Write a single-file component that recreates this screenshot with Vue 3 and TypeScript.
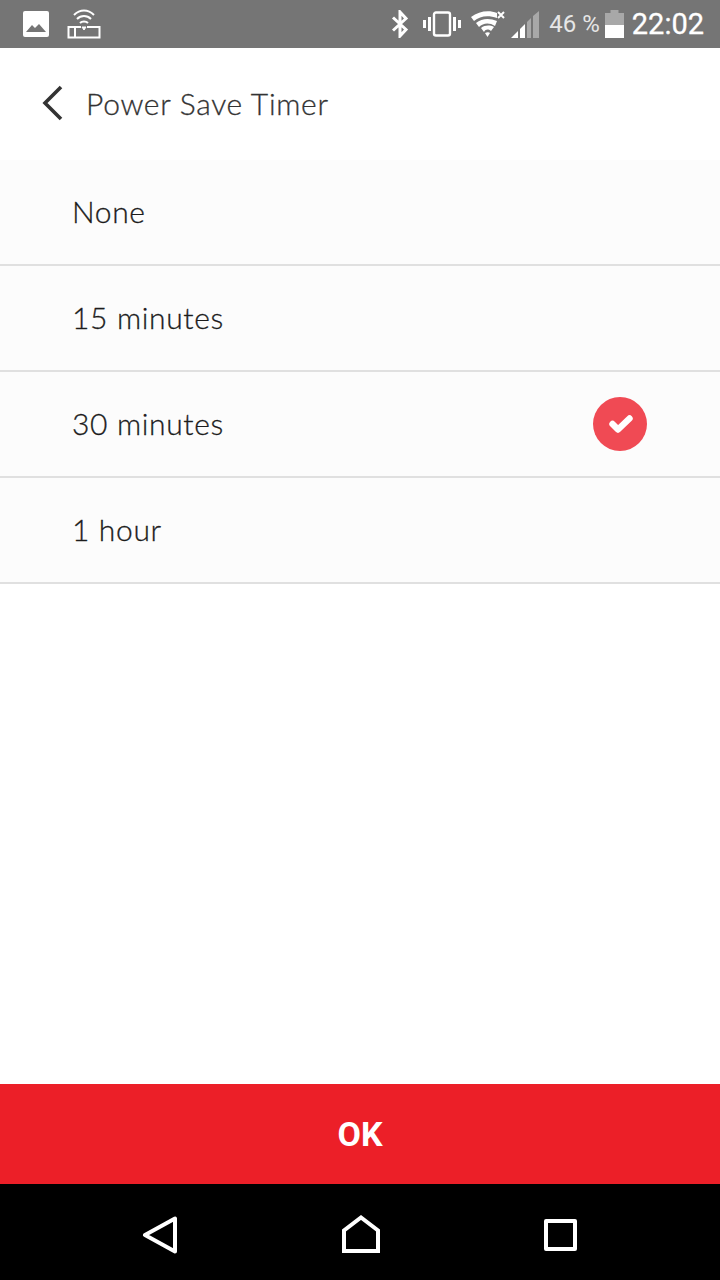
<script setup lang="ts">
const rows: { label: string; checked: boolean }[] = [
  { label: 'None', checked: false },
  { label: '15 minutes', checked: false },
  { label: '30 minutes', checked: true },
  { label: '1 hour', checked: false },
]
</script>

<template>
  <div class="page">
    <div class="status">
      <div class="left">
        <svg width="26" height="26" viewBox="0 0 26 26">
          <rect width="26" height="26" rx="2" fill="#fff" />
          <path d="M3 21 L9 14 L12 17 L16 13 L23 21 Z" fill="#757575" />
        </svg>
        <svg width="34" height="30" viewBox="0 0 34 30" fill="none" stroke="#fff">
          <path d="M7 6 C13 0 21 0 27 6" stroke-width="2" />
          <path d="M10 10 C14 6 20 6 24 10" stroke-width="2" />
          <path d="M13 14 C15 12 19 12 21 14" stroke-width="2" />
          <path d="M15 18 L17 21 L19 18 Z" fill="#fff" stroke-width="1" />
          <path d="M14 18 H1.5 V28.5 H32.5 V18 H20 M8 18 V28.5" stroke-width="2" />
        </svg>
      </div>
      <div class="right">
        <svg class="bt" width="18" height="28" viewBox="0 0 18 28" fill="none" stroke="#fff" stroke-width="3">
          <path d="M2 7.5 L15 19.5 L9 26 V2 L15 8.5 L2 20.5" />
        </svg>
        <svg class="vib" width="38" height="26" viewBox="0 0 38 26" fill="none" stroke="#fff">
          <rect x="11" y="1.5" width="16" height="23" rx="2" stroke-width="2.4" />
          <path d="M1.5 9 V17 M6.5 6 V20 M31.5 6 V20 M36.5 9 V17" stroke-width="3" />
        </svg>
        <svg class="wifi" width="34" height="28" viewBox="0 0 34 28">
          <path d="M0 7 C8 1 18 0 26 3 V8 C17 5 9 6 3 11 Z" fill="#fff" />
          <path d="M5 13 C11 8 19 8 26 11 L24 16 C18 12 12 13 8 17 Z" fill="#fff" />
          <path d="M10 18 C14 15 19 15 23 17 L20 21 C17 19 15 19 13 22 Z" fill="#fff" />
          <path d="M14 23 C16 22 18 22 19 23 L16.500 27 Z" fill="#fff" />
          <path d="M27 2 L33 8 M33 2 L27 8" stroke="#fff" stroke-width="2" />
        </svg>
        <svg class="signal" width="29" height="28" viewBox="0 0 29 28">
          <path d="M0 27 L7 20 V27 Z" fill="#fff" />
          <path d="M9 18 L14 13 V27 H9 Z" fill="#fff" />
          <path d="M16 11 L20 7 V27 H16 Z" fill="#a8a8a8" />
          <path d="M22 5 L28 0 V27 H22 Z" fill="#a8a8a8" />
        </svg>
        <span class="pct">46 %</span>
        <svg class="batt" width="19" height="28" viewBox="0 0 19 28">
          <path d="M5.500 0 H13.500 V3 H19 V28 H0 V3 H5.500 Z" fill="#a8a8a8" />
          <rect y="15" width="19" height="13" fill="#fff" />
        </svg>
        <span class="time">22:02</span>
      </div>
    </div>

    <header class="head">
      <svg class="chev" width="24" height="38" viewBox="0 0 24 38" fill="none" stroke="#333" stroke-width="3.600">
        <path d="M20 3 L4 19 L20 35" />
      </svg>
      <span class="title">Power Save Timer</span>
    </header>

    <ul class="list">
      <li v-for="r in rows" :key="r.label" class="row">
        <span class="label">{{ r.label }}</span>
        <svg v-if="r.checked" class="check" width="54" height="54" viewBox="0 0 54 54">
          <circle cx="27" cy="27" r="27" fill="#f04a54" />
          <path d="M19.500 27 L25 32.500 L36.500 21.500" fill="none" stroke="#fff" stroke-width="6.400" stroke-linecap="round" stroke-linejoin="round" />
        </svg>
      </li>
    </ul>

    <div class="spacer"></div>

    <button class="ok" type="button">OK</button>

    <nav class="nav">
      <svg class="nav-back" width="36" height="38" viewBox="0 0 36 38" fill="none" stroke="#fff" stroke-width="4" stroke-linejoin="round">
        <path d="M33 2.500 V35.500 L3 19 Z" />
      </svg>
      <svg width="38" height="38" viewBox="0 0 38 38" fill="none" stroke="#fff" stroke-width="4">
        <path d="M2 36 V15.500 L19 2.500 L36 15.500 V36 Z" />
      </svg>
      <svg class="nav-recent" width="33" height="32" viewBox="0 0 33 32" fill="none" stroke="#fff" stroke-width="4" stroke-linejoin="round">
        <rect x="2" y="2" width="29" height="28" />
      </svg>
    </nav>
  </div>
</template>

<style scoped>
.page {
  width: 720px;
  height: 1280px;
  display: flex;
  flex-direction: column;
  background: #fff;
  font-family: Lato, "Noto Sans", sans-serif;
  overflow: hidden;
}
.status {
  height: 48px;
  flex: none;
  background: #757575;
  display: flex;
  align-items: center;
  justify-content: space-between;
  padding: 0 16px 0 23px;
  color: #fff;
}
.left {
  display: flex;
  align-items: center;
  gap: 18px;
}
.right {
  display: flex;
  align-items: center;
}
.vib { margin-left: 14px; }
.wifi { margin-left: 10px; }
.signal { margin-left: 6px; margin-top: 2px; }
.pct {
  margin-left: 9px;
  font-family: Roboto, sans-serif;
  font-size: 24px;
  color: #e6e6e6;
}
.batt { margin-left: 5px; }
.time {
  margin-left: 8px;
  font-family: Roboto, sans-serif;
  font-size: 29px;
  -webkit-text-stroke: 0.3px #fff;
}
.head {
  height: 112px;
  flex: none;
  display: flex;
  align-items: center;
  padding: 0 0 2px 41px;
  box-sizing: border-box;
}
.title {
  margin-left: 21px;
  font-size: 30px;
  font-weight: 300;
  letter-spacing: 0.7px;
  color: #333;
  -webkit-text-stroke: 0.3px #333;
}
.list {
  list-style: none;
  margin: 0;
  padding: 0;
}
.row {
  height: 106px;
  box-sizing: border-box;
  display: flex;
  align-items: center;
  justify-content: space-between;
  padding: 0 73px 2px 72px;
  background: #fcfcfc;
  border-bottom: 2px solid #e0e0e0;
}
.label {
  font-size: 30px;
  font-weight: 300;
  letter-spacing: 0.65px;
  color: #1c1c1c;
  -webkit-text-stroke: 0.3px #1c1c1c;
}
.check {
  display: block;
  margin-top: 2px;
}
.spacer { flex: 1; }
.ok {
  height: 100px;
  flex: none;
  border: 0;
  padding: 0;
  background: #ec1f28;
  color: #fff;
  font-family: Roboto, sans-serif;
  font-weight: 700;
  font-size: 34px;
}
.nav {
  height: 96px;
  flex: none;
  box-sizing: border-box;
  background: #000;
  display: flex;
  align-items: center;
  justify-content: space-between;
  padding: 4px 143px 0 142px;
}
.nav-back { margin-top: 2px; }
.nav-recent { margin-top: 2px; }
</style>
